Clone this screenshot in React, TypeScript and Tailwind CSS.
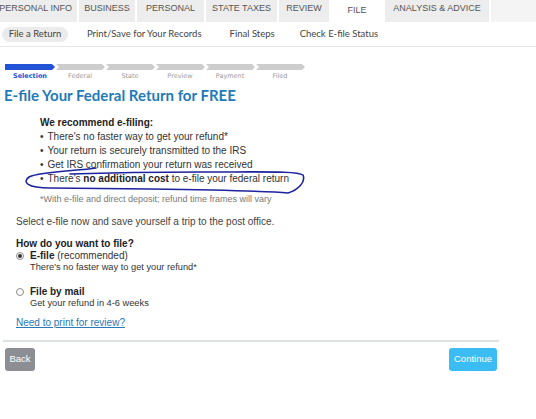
import React from "react";

const tabs = [
  { label: "PERSONAL INFO", w: "w-[77px]", cls: "justify-end pr-[5px]" },
  { label: "BUSINESS", w: "w-[56px]", cls: "justify-center" },
  { label: "PERSONAL", w: "w-[67px]", cls: "justify-center" },
  { label: "STATE TAXES", w: "w-[71px]", cls: "justify-center" },
  { label: "REVIEW", w: "w-[50px]", cls: "justify-center" },
];

const steps = ["Selection", "Federal", "State", "Preview", "Payment", "Filed"];

function TabBar() {
  return (
    <div className="flex h-[22px] gap-[2px] bg-white text-[9px] text-[#555] font-['Liberation_Sans',Arial,sans-serif]">
      {tabs.map(t => (
        <div key={t.label} className={`flex items-center pb-[5px] bg-[#ededed] whitespace-nowrap overflow-hidden ${t.w} ${t.cls}`}>{t.label}</div>
      ))}
      <div className="flex items-center justify-center pb-[1px] w-[52px] bg-white">FILE</div>
      <div className="flex items-center justify-center pb-[5px] w-[104px] bg-[#ededed] whitespace-nowrap">ANALYSIS &amp; ADVICE</div>
      <div className="flex-1 bg-[#f4f4f4]" />
    </div>
  );
}

function SubNav() {
  return (
    <div className="flex items-center h-[25px] border-b border-[#e6e6e6] text-[9.5px] text-[#444] font-['Lato',sans-serif]">
      <div className="ml-[2px] h-[15px] w-[66px] flex items-center justify-center rounded-full bg-[#ebebeb]">File a Return</div>
      <div className="ml-[19px]">Print/Save for Your Records</div>
      <div className="ml-[28px]">Final Steps</div>
      <div className="ml-[25px]">Check E-file Status</div>
    </div>
  );
}

function Progress() {
  return (
    <div className="ml-[5px] mt-[17px] w-[300px]">
      <svg width="300" height="6" viewBox="0 0 300 6" className="block">
        {steps.map((s, i) => {
          const x = i * 50;
          const pts = i === 0
            ? `${x},0 ${x + 47},0 ${x + 50},3 ${x + 47},6 ${x},6`
            : `${x + 1},0 ${x + 47},0 ${x + 50},3 ${x + 47},6 ${x + 1},6 ${x + 4},3`;
          return <polygon key={s} points={pts} fill={i === 0 ? "#2353d6" : "#cdcdcd"} />;
        })}
      </svg>
      <div className="flex mt-[1px] font-['DejaVu_Sans',sans-serif] text-[6.5px] leading-[10px]">
        {steps.map((s, i) => (
          <div key={s} className={`w-[50px] text-center ${i === 0 ? "font-bold text-[#2353d6]" : "text-[#999]"}`}>{s}</div>
        ))}
      </div>
    </div>
  );
}

function Radio({ on }: any) {
  return (
    <span className="mt-[3px] w-[8px] h-[8px] rounded-full border border-[#8a8a8a] bg-white flex items-center justify-center flex-shrink-0">
      {on && <span className="w-[4px] h-[4px] rounded-full bg-[#333]" />}
    </span>
  );
}

export default function App() {
  return (
    <div className="relative w-[536px] h-[419px] bg-white overflow-hidden font-['Liberation_Sans',Arial,sans-serif]">
      <TabBar />
      <SubNav />
      <Progress />

      <div className="ml-[4px] mt-[5px] text-[15px] leading-[18px] font-bold text-[#1f7ab8] font-['Lato',sans-serif]">
        E-file Your Federal Return for FREE
      </div>

      <div className="ml-[40px] mt-[12px] text-[10px] leading-[14px] text-[#333]">
        <div className="font-bold text-[#222]">We recommend e-filing:</div>
        {[
          <>There's no faster way to get your refund*</>,
          <>Your return is securely transmitted to the IRS</>,
          <>Get IRS confirmation your return was received</>,
          <>There's <b className="text-[#222]">no additional cost</b> to e-file your federal return</>,
        ].map((b, i) => (
          <div key={i} className="flex gap-[4px]"><span>•</span><span>{b}</span></div>
        ))}
        <div className="mt-[6px] text-[9px] text-[#7a7a7a]">*With e-file and direct deposit; refund time frames will vary</div>
      </div>

      <div className="ml-[16px] mt-[9px] text-[10px] leading-[14px] text-[#444]">
        Select e-file now and save yourself a trip to the post office.
      </div>

      <div className="ml-[16px] mt-[8px] text-[10px] leading-[13px] text-[#333]">
        <div className="font-bold text-[#222]">How do you want to file?</div>
        <div className="flex gap-[6px] mt-[-1px]">
          <Radio on />
          <div>
            <div><b className="text-[#222]">E-file</b> (recommended)</div>
            <div className="text-[9.25px] leading-[11px]">There's no faster way to get your refund*</div>
          </div>
        </div>
        <div className="flex gap-[6px] mt-[12px]">
          <Radio />
          <div>
            <div className="font-bold text-[#222]">File by mail</div>
            <div className="text-[9.25px] leading-[11px]">Get your refund in 4-6 weeks</div>
          </div>
        </div>
        <div className="mt-[7px] text-[#2a78b8] underline">Need to print for review?</div>
      </div>

      <div className="ml-[3px] mt-[11px] w-[496px] h-[2px] bg-[#dde1e4]" />
      <div className="ml-[5px] w-[492px] mt-[6px] flex justify-between text-[9.5px] text-white">
        <div className="w-[30px] h-[23px] rounded-[3px] bg-[#8c8e94] flex items-center justify-center">Back</div>
        <div className="w-[48px] h-[23px] rounded-[3px] bg-[#3bbcf2] flex items-center justify-center">Continue</div>
      </div>

      <svg className="absolute inset-0 pointer-events-none" width="536" height="419" viewBox="0 0 536 419" fill="none">
        <path
          d="M 96 168 C 80 171, 42 171, 29 177 C 22 182, 27 188, 50 188 L 150 189 C 220 190, 268 191, 288 193 C 298 190, 306 182, 303 175 C 298 171, 268 172, 200 172 C 140 172, 100 173, 70 174"
          stroke="#1c239e"
          strokeWidth="1.6"
          strokeLinecap="round"
        />
      </svg>
    </div>
  );
}
